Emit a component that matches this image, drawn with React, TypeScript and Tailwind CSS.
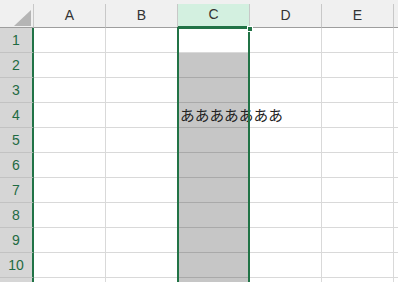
const COLS = ["A", "B", "C", "D", "E"];
const ROWS = [1, 2, 3, 4, 5, 6, 7, 8, 9, 10, 11];

function Corner() {
  return (
    <div className="w-[34px] h-[24px] shrink-0 bg-[#f0f0f0] border-r border-b border-[#c8c8c8] border-b-[#9e9e9e] relative">
      <svg className="absolute left-[14px] top-[6px]" width="17" height="16" viewBox="0 0 17 16">
        <polygon points="17,0 17,16 0,16" fill="#b5b5b5" />
      </svg>
    </div>
  );
}

function ColHeader({ label }: { label: string }) {
  const selected = label === "C";
  return (
    <div
      className={
        selected
          ? "w-[72px] h-[24px] shrink-0 flex items-center justify-center bg-[#d3f0e0] border-r border-[#c8c8c8] border-b-2 border-b-[#217346] text-[#333] pb-[1px]"
          : "w-[72px] h-[24px] shrink-0 flex items-center justify-center bg-[#f0f0f0] border-r border-[#c8c8c8] border-b border-b-[#9e9e9e] text-[#333]"
      }
    >
      {label}
    </div>
  );
}

function Row({ n }: { n: number }) {
  return (
    <div className="flex h-[25px] shrink-0">
      <div className="w-[34px] shrink-0 flex items-center justify-center bg-[#d6d6d6] border-b border-[#c2c2c2] border-r-2 border-r-[#217346] text-[#1e6b42]">
        {n <= 10 ? n : null}
      </div>
      {COLS.map((c) => {
        if (c === "C") {
          return (
            <div
              key={c}
              className={
                n === 1
                  ? "w-[72px] shrink-0 bg-white border-r border-b border-[#d9d9d9]"
                  : "w-[72px] shrink-0 bg-[#c6c6c6] border-r border-b border-[#a9a9a9] flex items-center"
              }
            >
              {n === 4 && (
                <span className="relative z-10 whitespace-nowrap pl-[2px] text-[14.7px] text-[#222] font-['Noto_Sans_CJK_JP',sans-serif] leading-none">
                  あああああああ
                </span>
              )}
            </div>
          );
        }
        return <div key={c} className="w-[72px] shrink-0 border-r border-b border-[#d9d9d9]" />;
      })}
      <div className="flex-1 border-b border-[#d9d9d9]" />
    </div>
  );
}

export default function App() {
  return (
    <div className="w-[398px] h-[282px] overflow-hidden bg-white relative font-['Liberation_Sans',sans-serif] text-[14px] flex flex-col">
      <div className="h-[4px] shrink-0 bg-[#f0f0f0]" />
      <div className="flex shrink-0">
        <Corner />
        {COLS.map((c) => (
          <ColHeader key={c} label={c} />
        ))}
        <div className="flex-1 h-[24px] bg-[#f0f0f0] border-b border-[#9e9e9e]" />
      </div>
      {ROWS.map((n) => (
        <Row key={n} n={n} />
      ))}
      <div className="absolute left-[177px] top-[27px] w-[73px] h-[270px] border-2 border-[#217346] pointer-events-none z-20" />
      <div className="absolute left-[247px] top-[26px] w-[6px] h-[6px] bg-[#217346] border border-white z-30" />
    </div>
  );
}
